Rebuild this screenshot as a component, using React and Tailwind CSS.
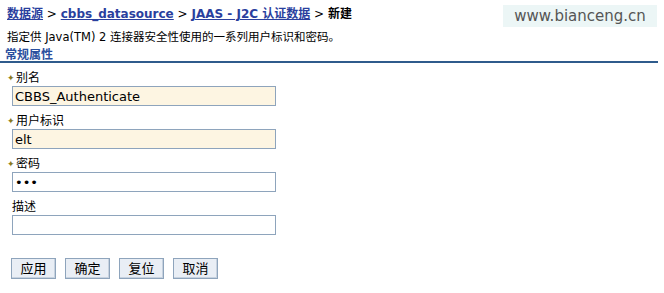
import React from 'react';

const font = { fontFamily: '"DejaVu Sans", "Noto Sans CJK SC", sans-serif' };

const Field = ({ label, required, value, type = 'text', filled }) => (
  <div className="flex flex-col">
    <div className="flex items-center h-[15px] text-[12px] leading-[15px] text-black">
      <span className="w-[10px] text-[9px] leading-none text-[#8a7a20] pl-[1px]">
        {required ? '✦' : ''}
      </span>
      <span className={required ? '' : '-ml-[4px]'}>{label}</span>
    </div>
    <input
      type={type}
      readOnly
      value={value}
      className={`ml-[6px] w-[264px] h-[20px] px-[2px] text-[13px] text-black border border-[#8ea4bc] outline-none ${
        filled ? 'bg-[#fdf5e2]' : 'bg-white'
      }`}
      style={font}
    />
  </div>
);

const Btn = ({ children }) => (
  <button className="w-[45px] h-[21px] text-[13px] leading-none text-black bg-[#e9eef5] border border-[#8ea4bc] shadow-[inset_-1px_-1px_0_#c7d2df]">
    {children}
  </button>
);

export default function App() {
  return (
    <div className="w-[664px] h-[293px] bg-white overflow-hidden relative text-[12px]" style={font}>
      <div className="absolute left-[503px] top-[5px] w-[154px] h-[22px] bg-[#ecf6f6] flex items-center justify-center text-[15px] text-[#555]">
        www.bianceng.cn
      </div>
      <div className="pt-[5px] pl-[7px] text-[12px] font-bold leading-[18px] text-black">
        <a className="text-[#2a3f9e] underline">数据源</a>
        <span className="font-normal"> &gt; </span>
        <a className="text-[#2a3f9e] underline">cbbs_datasource</a>
        <span className="font-normal"> &gt; </span>
        <a className="text-[#2a3f9e] underline">JAAS - J2C 认证数据</a>
        <span className="font-normal"> &gt; </span>
        <span>新建</span>
      </div>
      <div className="pl-[7px] mt-[6px] text-[11.5px] leading-[16px] text-black">
        指定供 Java(TM) 2 连接器安全性使用的一系列用户标识和密码。
      </div>
      <div className="mt-[5px] w-[658px] border-b-2 border-[#2f5b8c] text-[12px] leading-[11px]">
        <span className="pl-[5px] font-bold text-[#2a4f9e]">常规属性</span>
      </div>
      <div className="pl-[6px] mt-[8px] flex flex-col gap-[8px]">
        <Field label="别名" required value="CBBS_Authenticate" filled />
        <Field label="用户标识" required value="elt" filled />
        <Field label="密码" required value="abc" type="password" />
        <Field label="描述" value="" />
      </div>
      <div className="pl-[11px] mt-[23px] flex gap-[9px]">
        <Btn>应用</Btn>
        <Btn>确定</Btn>
        <Btn>复位</Btn>
        <Btn>取消</Btn>
      </div>
    </div>
  );
}
